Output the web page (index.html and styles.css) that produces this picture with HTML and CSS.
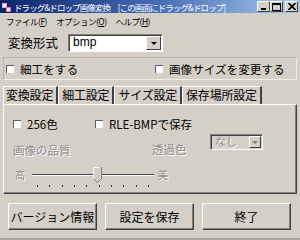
FILE: index.html
```html
<!DOCTYPE html>
<html lang="ja">
  <head>
    <meta charset="UTF-8" />
    <title>ドラッグ＆ドロップ画像変換</title>
    <link rel="stylesheet" href="styles.css">
  </head>
  <body>
    <div class="window">
      <div class="titlebar">
        <svg class="app-icon" width="9" height="10" viewBox="0 0 9 10">
          <rect x="0" y="1" width="5" height="5" fill="#f0a0c8" />
          <rect x="1" y="2" width="3" height="3" fill="#ffffff" />
          <rect x="4" y="5" width="5" height="5" fill="#e070b0" />
          <rect x="5" y="6" width="3" height="3" fill="#ffe0f0" />
        </svg>
        <span class="title-text">ドラッグ&amp;ドロップ画像変換　[この画面にドラッグ&amp;ドロップ]</span>
        <div class="title-buttons">
          <span class="tbtn">
            <svg width="8" height="7" viewBox="0 0 8 7"><rect x="1" y="5" width="5" height="2" fill="#000" /></svg>
          </span>
          <span class="tbtn">
            <svg width="9" height="8" viewBox="0 0 9 8"><rect x="0.5" y="0.5" width="8" height="7" fill="none" stroke="#000" /><rect x="0" y="0" width="9" height="2" fill="#000" /></svg>
          </span>
          <span class="tbtn close">
            <svg width="8" height="7" viewBox="0 0 8 7"><path d="M0.5 0 L7.5 7 M7.5 0 L0.5 7" stroke="#000" stroke-width="1.6" /></svg>
          </span>
        </div>
      </div>

      <div class="menubar">
        <span class="menu-item">ファイル(<u>F</u>)</span>
        <span class="menu-item">オプション(<u>O</u>)</span>
        <span class="menu-item">ヘルプ(<u>H</u>)</span>
      </div>

      <div class="format-row">
        <span class="format-label">変換形式</span>
        <div class="combo">
          <span class="combo-text">bmp</span>
          <span class="combo-btn"><span class="arrow"></span></span>
        </div>
      </div>

      <div class="options">
        <label class="check opt-first"><span class="box"></span>細工をする</label>
        <label class="check opt-second"><span class="box"></span>画像サイズを変更する</label>
      </div>

      <div class="tabs">
        <span class="tab active">変換設定</span>
        <span class="tab">細工設定</span>
        <span class="tab">サイズ設定</span>
        <span class="tab">保存場所設定</span>
      </div>

      <div class="panel">
        <div class="panel-row">
          <label class="check small c256"><span class="box"></span>256色</label>
          <label class="check small"><span class="box"></span>RLE-BMPで保存</label>
        </div>
        <div class="quality-row">
          <span class="disabled quality-label">画像の品質</span>
          <span class="disabled trans-label">透過色</span>
          <div class="combo combo-off">
            <span class="combo-text">なし</span>
            <span class="combo-btn"><span class="arrow"></span></span>
          </div>
        </div>
        <div class="slider-row">
          <span class="disabled slider-end">高</span>
          <div class="slider">
            <div class="track"></div>
            <svg class="thumb" width="9" height="16" viewBox="0 0 9 16">
              <path d="M0.5 11.5 V0.5 H8.5 V11.5 L4.5 15.5 Z" fill="#d4d0c8" stroke="#808080" />
              <path d="M0.5 11.5 V0.5 H7.5" fill="none" stroke="#ffffff" />
            </svg>
            <div class="ticks">
              <i></i><i></i><i></i><i></i><i></i><i></i><i></i><i></i><i></i><i></i>
            </div>
          </div>
          <span class="disabled slider-end">美</span>
        </div>
      </div>

      <div class="buttons">
        <button class="btn">バージョン情報</button>
        <button class="btn">設定を保存</button>
        <button class="btn">終了</button>
      </div>
    </div>
  </body>
</html>
```

FILE: styles.css
```css
* {
  margin: 0;
  padding: 0;
  box-sizing: border-box;
}
body {
  width: 300px;
  height: 240px;
  overflow: hidden;
  background: #d4d0c8;
  font-family: "Noto Sans CJK JP", sans-serif;
  color: #000;
}
.window {
  width: 300px;
  height: 240px;
  display: flex;
  flex-direction: column;
  background: #d4d0c8;
  border-bottom: 2px solid #a8a49c;
}

/* title bar */
.titlebar {
  height: 13px;
  display: flex;
  align-items: center;
  background: linear-gradient(to right, #0a246a, #4a70b8 55%, #a6caf0);
  padding-left: 2px;
}
.app-icon {
  flex: none;
}
.title-text {
  margin-left: 3px;
  font-size: 8.5px;
  line-height: 12px;
  color: #fff;
  white-space: nowrap;
  letter-spacing: -0.9px;
}
.title-buttons {
  margin-left: auto;
  display: flex;
  padding-right: 2px;
}
.tbtn {
  width: 13px;
  height: 11px;
  display: flex;
  align-items: center;
  justify-content: center;
  background: #d4d0c8;
  border: 1px solid;
  border-color: #fff #404040 #404040 #fff;
}
.tbtn.close {
  margin-left: 2px;
}

/* menu */
.menubar {
  height: 15px;
  display: flex;
  align-items: center;
  font-size: 8.5px;
  padding-left: 6px;
  gap: 9px;
  letter-spacing: -0.5px;
}
.menu-item u {
  text-decoration: underline;
}

/* format */
.format-row {
  display: flex;
  align-items: center;
  margin-top: 6px;
  padding-left: 8px;
}
.format-label {
  width: 60px;
  font-size: 12.5px;
  line-height: 18px;
}
.combo {
  width: 95px;
  height: 18px;
  display: flex;
  background: #fff;
  border: 1px solid;
  border-color: #808080 #fff #fff #808080;
  box-shadow: inset 1px 1px 0 #404040;
}
.combo-text {
  flex: 1;
  padding-left: 4px;
  font-family: "Liberation Sans", sans-serif;
  font-size: 12px;
  line-height: 15px;
}
.combo-btn {
  width: 15px;
  margin: 1px;
  display: flex;
  align-items: center;
  justify-content: center;
  background: #d4d0c8;
  border: 1px solid;
  border-color: #fff #404040 #404040 #fff;
}
.arrow {
  width: 0;
  height: 0;
  border-left: 3px solid transparent;
  border-right: 3px solid transparent;
  border-top: 3px solid #000;
}

/* top options */
.options {
  height: 23px;
  margin: 5px 3px 0;
  display: flex;
  align-items: center;
  border: 1px solid;
  border-color: #b8b4ac #f0eee8 #f0eee8 #b8b4ac;
}
.check {
  display: flex;
  align-items: center;
  font-size: 11.6px;
  line-height: 14px;
  white-space: nowrap;
}
.box {
  width: 8px;
  height: 8px;
  margin-right: 6px;
  background: #fff;
  border-top: 1px solid #606060;
  border-left: 1px solid #606060;
}
.opt-first {
  margin-left: 2px;
  width: 149px;
}

/* tabs */
.tabs {
  display: flex;
  margin-top: 6px;
  padding-left: 3px;
  height: 18px;
}
.tab {
  font-size: 12px;
  line-height: 16px;
  padding: 0 3px;
  border-top: 1px solid #fff;
  border-left: 1px solid #fff;
  border-right: 2px solid #404040;
  white-space: nowrap;
  letter-spacing: -0.2px;
}
.tab.active {
  padding-left: 2px;
}

/* tab panel */
.panel {
  height: 90px;
  margin: 0 3px;
  border: 1px solid;
  border-color: #fff #404040 #404040 #fff;
  box-shadow: inset -1px -1px 0 #808080;
  padding: 12px 0 0 9px;
}
.panel-row {
  display: flex;
  height: 14px;
}
.check.small {
  font-size: 11.5px;
}
.c256 {
  width: 82px;
}
.quality-row {
  display: flex;
  align-items: flex-start;
  margin-top: 3px;
  height: 26px;
}
.disabled {
  color: #8c8a86;
  text-shadow: 1px 1px 0 #fff;
  font-size: 11.5px;
  line-height: 14px;
}
.quality-label {
  width: 139px;
  margin-top: 9px;
}
.trans-label {
  width: 58px;
  margin-top: 8px;
}
.combo-off {
  width: 53px;
  height: 16px;
  background: #d4d0c8;
}
.combo-off .combo-text {
  font-family: "Noto Sans CJK JP", sans-serif;
  font-size: 11px;
  line-height: 13px;
  color: #8c8a86;
  text-shadow: 1px 1px 0 #fff;
}
.combo-off .combo-btn {
  width: 12px;
}
.combo-off .arrow {
  border-top-color: #808080;
}

/* slider */
.slider-row {
  display: flex;
  align-items: flex-start;
  margin-top: 7px;
}
.slider-end {
  margin-top: 1px;
  font-size: 10px;
  padding: 0 2px;
}
.slider {
  position: relative;
  width: 122px;
  height: 22px;
  margin: 0 2px 0 5px;
}
.track {
  margin-top: 7px;
  height: 2px;
  border-top: 1px solid #404040;
  border-bottom: 1px solid #fff;
}
.thumb {
  position: absolute;
  left: 61px;
  top: 0;
}
.ticks {
  display: flex;
  justify-content: space-between;
  margin: 9px 5px 0;
}
.ticks i {
  width: 1px;
  height: 2px;
  background: #303030;
}

/* bottom buttons */
.buttons {
  display: flex;
  gap: 8px;
  margin-top: 9px;
  padding-left: 8px;
}
.btn {
  width: 89px;
  height: 27px;
  font-family: "Noto Sans CJK JP", sans-serif;
  font-size: 12px;
  background: #d4d0c8;
  color: #000;
  border: 1px solid;
  border-color: #fff #404040 #404040 #fff;
  box-shadow: inset -1px -1px 0 #808080;
}
```
